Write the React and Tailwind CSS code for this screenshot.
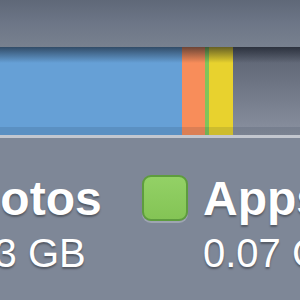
const SEGMENTS = [
  { key: 'photos', width: 'w-[182px]', color: 'bg-[#66a0d6]' },
  { key: 'other', width: 'w-[23px]', color: 'bg-[#f88d5a]' },
  { key: 'apps', width: 'w-[4px]', color: 'bg-[#80c45a]' },
  { key: 'docs', width: 'w-[24px]', color: 'bg-[#e8d22e]' },
];

const SHADOW = '[text-shadow:0_2px_2px_rgba(0,0,0,0.35)]';

export default function App() {
  return (
    <div className="w-[300px] h-[300px] overflow-hidden flex flex-col bg-[#7e8797] font-['Liberation_Sans',Arial,sans-serif] text-white">
      {/* top band */}
      <div className="h-[47px] shrink-0 bg-gradient-to-b from-[#5f6878] via-[#6d7687] to-[#78818f]" />

      {/* storage bar */}
      <div className="relative h-[88px] shrink-0 flex">
        {SEGMENTS.map((s) => (
          <div key={s.key} className={`${s.width} ${s.color} shrink-0`} />
        ))}
        <div className="flex-1 bg-gradient-to-b from-[#5a6170] to-[#8a91a0]" />
        {/* inset shading over the bar */}
        <div className="absolute inset-x-0 top-0 h-[16px] bg-gradient-to-b from-[rgba(15,20,30,0.6)] via-[rgba(15,20,30,0.3)] to-transparent" />
        <div className="absolute inset-x-0 bottom-0 h-[8px] bg-[rgba(20,30,50,0.12)]" />
      </div>
      <div className="h-[3px] shrink-0 bg-[#c3c7cf]" />

      {/* legend */}
      <div className="flex items-start pt-[37px]">
        <div className="w-[203px] ml-[-61px] shrink-0">
          <div className={`text-[48px] leading-none font-bold ${SHADOW}`}>Photos</div>
          <div className={`mt-[10px] text-[40px] leading-none ${SHADOW}`}>12.3 GB</div>
        </div>

        <div className="w-[46px] h-[46px] shrink-0 rounded-[9px] border-2 border-[#5e9c3e] bg-gradient-to-b from-[#93d166] to-[#84c455] shadow-[0_2px_0_rgba(255,255,255,0.25)]" />

        <div className="ml-[15px] shrink-0 whitespace-nowrap">
          <div className={`text-[48px] leading-none font-bold ${SHADOW}`}>Apps</div>
          <div className={`mt-[10px] text-[40px] leading-none ${SHADOW}`}>0.07 GB</div>
        </div>
      </div>
    </div>
  );
}
